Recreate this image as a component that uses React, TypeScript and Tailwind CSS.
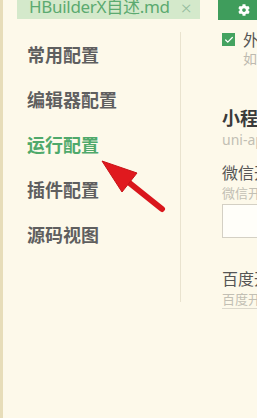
import React from 'react';
import { Check } from 'lucide-react';
import { FaCog } from 'react-icons/fa';

const menu = [
  { label: '常用配置', active: false },
  { label: '编辑器配置', active: false },
  { label: '运行配置', active: true },
  { label: '插件配置', active: false },
  { label: '源码视图', active: false },
];

const font = { fontFamily: '"Noto Sans", "Noto Sans CJK SC", sans-serif' };

const Arrow = () => (
  <svg className="absolute left-0 top-0 pointer-events-none" width="257" height="418" viewBox="0 0 257 418">
    <line x1="127" y1="181" x2="162" y2="209" stroke="#d9161c" strokeWidth="6" strokeLinecap="round" />
    <polygon points="102,161 137,173 122,192" fill="#e0191e" stroke="#c81318" strokeWidth="1" strokeLinejoin="round" />
  </svg>
);

export default function App() {
  return (
    <div className="relative w-[257px] h-[418px] overflow-hidden bg-[#fdf9ea] flex" style={font}>
      <div className="w-[3px] h-full bg-[#e7ddb9]" />
      <div className="flex-1 flex flex-col min-w-0">
        {/* top bar */}
        <div className="h-[20px] flex items-start">
          <div className="ml-[14px] w-[187px] h-[19px] bg-[#d4e9cb] flex items-start pl-[12px] pr-[8px] justify-between">
            <span className="text-[17px] leading-[14px] tracking-[-0.3px] text-[#5caa70] whitespace-nowrap">HBuilderX自述.md</span>
            <span className="text-[19px] leading-[17px] font-light text-[#93bb9d]">×</span>
          </div>
          <div className="ml-[18px] w-[40px] h-[20px] bg-[#3f9d5c] flex items-center pl-[20px]">
            <FaCog size={12} color="#ffffff" />
          </div>
        </div>

        <div className="flex">
          {/* sidebar */}
          <div className="w-[178px] shrink-0 mt-[12px] h-[270px] border-r border-[#e9e3cf]">
            {menu.map((m) => (
              <div key={m.label} className="h-[45px] flex items-center pl-[24px]">
                <span
                  className={
                    'text-[18px] font-bold leading-none whitespace-nowrap ' +
                    (m.active ? 'text-[#4fa96b]' : 'text-[#5f5f5f]')
                  }
                >
                  {m.label}
                </span>
              </div>
            ))}
          </div>

          {/* content */}
          <div className="flex-1 min-w-0 overflow-hidden pl-[41px] pt-[12px] whitespace-nowrap">
            <div className="flex items-start">
              <div className="w-[13px] h-[13px] bg-[#44a360] flex items-center justify-center shrink-0 mt-[1px]">
                <Check size={10} color="#ffffff" strokeWidth={3} />
              </div>
              <span className="ml-[8px] text-[16px] leading-[16px] text-[#555555]">外部Web服务器调用URL</span>
            </div>
            <div className="pl-[21px] mt-[2px] text-[14px] leading-[18px] text-[#bdbab0]">如：http://localhost:8080</div>

            <div className="mt-[40px] text-[18px] font-bold leading-[20px] text-[#3a3a3a]">小程序运行配置</div>
            <div className="mt-[3px] text-[14px] leading-[18px] text-[#c2bfb4]">uni-app运行到小程序</div>

            <div className="mt-[14px] text-[16px] leading-[20px] text-[#555555]">微信开发者工具路径</div>
            <div className="mt-[2px] text-[13px] leading-[17px] text-[#c2bfb4]">微信开发者工具安装路径</div>
            <div className="mt-[2px] h-[34px] w-[200px] bg-[#fffef9] border border-[#d4d0c4]" />

            <div className="mt-[31px] text-[16px] leading-[20px] text-[#555555]">百度开发者工具路径</div>
            <div className="mt-[2px] text-[13px] leading-[17px] text-[#c2bfb4] border-b border-[#dcd8cc] w-[200px]">
              百度开发者工具安装路径
            </div>
          </div>
        </div>
      </div>
      <Arrow />
    </div>
  );
}
